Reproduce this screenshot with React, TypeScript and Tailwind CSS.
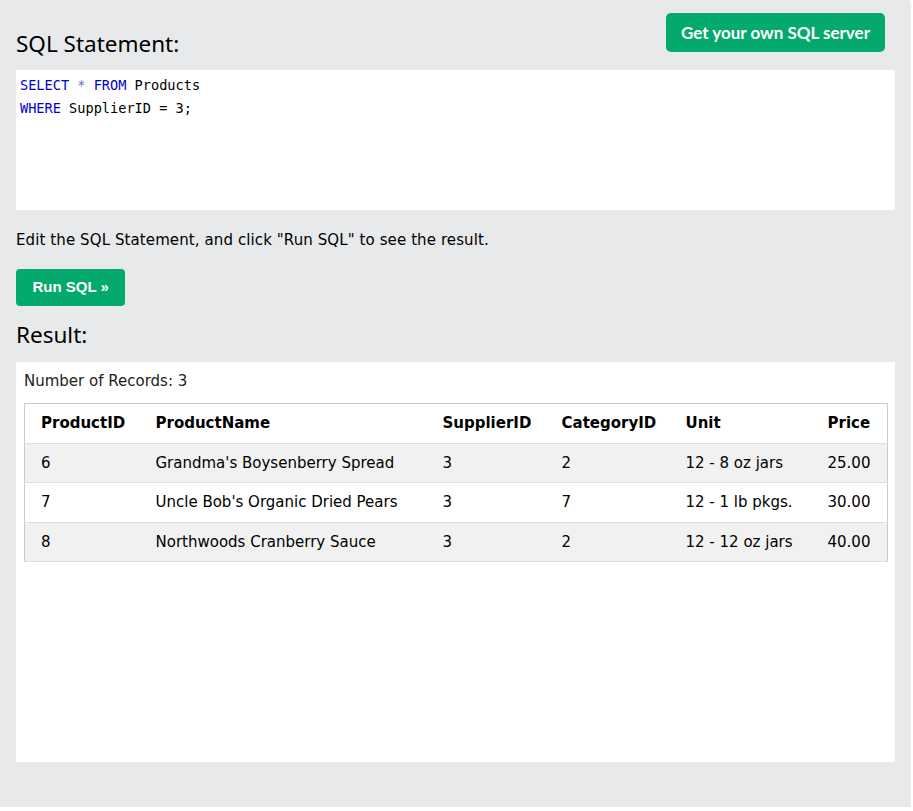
import React from 'react';

const rows = [
  { id: '6', name: "Grandma's Boysenberry Spread", supplier: '3', category: '2', unit: '12 - 8 oz jars', price: '25.00' },
  { id: '7', name: "Uncle Bob's Organic Dried Pears", supplier: '3', category: '7', unit: '12 - 1 lb pkgs.', price: '30.00' },
  { id: '8', name: 'Northwoods Cranberry Sauce', supplier: '3', category: '2', unit: '12 - 12 oz jars', price: '40.00' },
];

const headingFont = { fontFamily: '"Noto Sans", "Open Sans", sans-serif' };

export default function App() {
  return (
    <div className="w-[909px] bg-[#e7e9eb] pl-4 pr-[14px] pt-[13px] pb-[45px] shadow-[0_1px_3px_rgba(0,0,0,0.3)] font-['DejaVu_Sans',sans-serif] text-[15px] text-black">
      {/* header row */}
      <div className="flex items-end justify-between h-[57px]">
        <h2 className="text-[22.5px] leading-[30px] mb-[11px] font-normal text-black" style={headingFont}>
          SQL Statement:
        </h2>
        <button className="self-start mr-[10px] h-[39px] px-[15px] rounded-[5px] bg-[#04aa6d] text-white font-['Lato',sans-serif] font-bold text-[17px]">
          Get your own SQL server
        </button>
      </div>

      {/* code box */}
      <div className="h-[140px] bg-white pl-[4px] pt-[4px] font-['DejaVu_Sans_Mono',monospace] text-[13.6px] leading-[23px] text-black">
        <div>
          <span className="text-[#0000cd]">SELECT</span> <span className="text-[#6a6acc]">*</span>{' '}
          <span className="text-[#0000cd]">FROM</span> Products
        </div>
        <div>
          <span className="text-[#0000cd]">WHERE</span> SupplierID = 3;
        </div>
      </div>

      <p className="mt-[20px] leading-[20px] tracking-[0.1px]">Edit the SQL Statement, and click "Run SQL" to see the result.</p>

      <button className="mt-[19px] h-[37px] px-[16.5px] rounded-[4px] bg-[#04aa6d] text-white font-['Liberation_Sans',sans-serif] font-bold text-[15px]">
        Run SQL »
      </button>

      <h2 className="mt-[14px] text-[22.5px] leading-[30px] font-normal text-black" style={headingFont}>
        Result:
      </h2>

      {/* result box */}
      <div className="mt-[12px] h-[400px] bg-white p-[8px]">
        <div className="leading-[22px] text-[#222]">Number of Records: 3</div>
        <table className="mt-[11px] w-[863px] table-fixed border-collapse border border-[#cccccc] text-left">
          <colgroup>
            <col className="w-[123px]" />
            <col className="w-[287px]" />
            <col className="w-[119px]" />
            <col className="w-[124px]" />
            <col className="w-[142px]" />
            <col className="w-[68px]" />
          </colgroup>
          <thead>
            <tr className="border-b border-[#dddddd] bg-white">
              <th className="py-[8px] pl-[16px] pr-[8px] leading-[22.5px] font-bold">ProductID</th>
              <th className="py-[8px] px-[8px] leading-[22.5px] font-bold">ProductName</th>
              <th className="py-[8px] px-[8px] leading-[22.5px] font-bold">SupplierID</th>
              <th className="py-[8px] px-[8px] leading-[22.5px] font-bold">CategoryID</th>
              <th className="py-[8px] px-[8px] leading-[22.5px] font-bold">Unit</th>
              <th className="py-[8px] pl-[8px] pr-[16px] leading-[22.5px] font-bold">Price</th>
            </tr>
          </thead>
          <tbody>
            {rows.map((r, i) => (
              <tr key={r.id} className={`border-b border-[#dddddd] ${i % 2 === 0 ? 'bg-[#f1f1f1]' : 'bg-white'}`}>
                <td className="py-[8px] pl-[16px] pr-[8px] leading-[22.5px]">{r.id}</td>
                <td className="py-[8px] px-[8px] leading-[22.5px] whitespace-nowrap">{r.name}</td>
                <td className="py-[8px] px-[8px] leading-[22.5px]">{r.supplier}</td>
                <td className="py-[8px] px-[8px] leading-[22.5px]">{r.category}</td>
                <td className="py-[8px] px-[8px] leading-[22.5px] whitespace-nowrap">{r.unit}</td>
                <td className="py-[8px] pl-[8px] pr-[16px] leading-[22.5px]">{r.price}</td>
              </tr>
            ))}
          </tbody>
        </table>
      </div>
    </div>
  );
}
